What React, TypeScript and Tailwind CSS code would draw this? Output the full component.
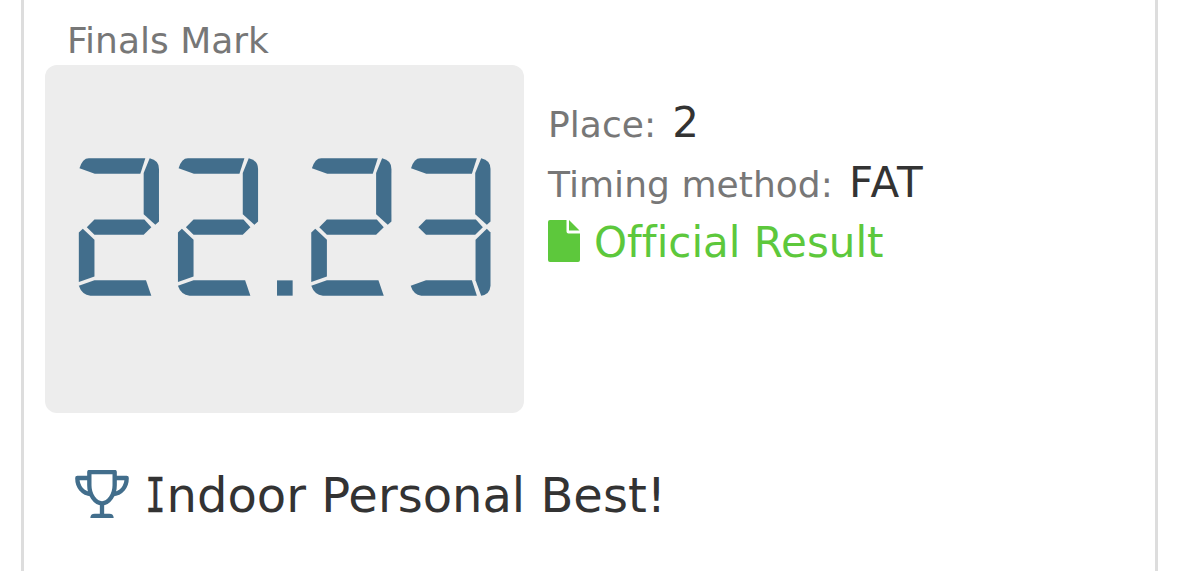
import type { ReactNode } from "react";

// Segment outlines of one LCD digit, drawn on a 244 x 415 cell
const segments = {
  top: "M3 31Q12 1 31 1H201L186 47H49Z",
  upperRight: "M214 1Q242 7 242 33V191L231 201L196 169V45Z",
  middle: "M25 208L48 185H198L219 208L196 231H48Z",
  lowerLeft: "M13 213L48 246V356L1 373V224Z",
  lowerRight: "M231 213L242 224V384Q240 410 214 414L197 368V246Z",
  bottomLong: "M1 384L48 368H203L219 414H36Q10 411 1 384Z",
  bottomShort: "M2 384L48 368H186L201 414H34Q10 411 2 384Z",
};

const two = [
  segments.top,
  segments.upperRight,
  segments.middle,
  segments.lowerLeft,
  segments.bottomLong,
];
const three = [
  segments.top,
  segments.upperRight,
  segments.middle,
  segments.lowerRight,
  segments.bottomShort,
];

const digits = [
  { x: 0, parts: two },
  { x: 298, parts: two },
  { x: 699, parts: two },
  { x: 997, parts: three },
];

function LcdTime() {
  return (
    <svg viewBox="0 0 1242 415" className="h-[138px] w-[414px] fill-[#426e8c]" aria-label="22.23">
      {digits.map((d) => (
        <g key={d.x} transform={`translate(${d.x} 0)`}>
          {d.parts.map((p) => (
            <path key={p} d={p} />
          ))}
        </g>
      ))}
      <rect x="597" y="368" width="47" height="46" />
    </svg>
  );
}

function FileIcon() {
  return (
    <svg viewBox="0 0 32 42" className="-mt-[3px] h-[42px] w-8 shrink-0 fill-[#5dc83c]">
      <path d="M2 0H18.5V11.5Q18.5 13.5 20.5 13.5H32V40Q32 42 30 42H2Q0 42 0 40V2Q0 0 2 0Z" />
      <path d="M21 0L31.5 10.5H21Z" />
    </svg>
  );
}

function TrophyIcon() {
  return (
    <svg
      viewBox="0 0 162 144"
      className="h-12 w-[54px] shrink-0 fill-none stroke-[#426e8c]"
      strokeWidth="13"
    >
      <path d="M43 6H119V46C119 74 102 100 81 100S43 74 43 46Z" strokeLinejoin="round" />
      <path
        d="M43 24H7C7 50 22 70 50 73M119 24H155C155 50 140 70 112 73"
        strokeLinejoin="round"
      />
      <path d="M81 100V136" />
      <path d="M46 144Q46 131 59 131H103Q116 131 116 144Z" className="fill-[#426e8c] stroke-none" />
    </svg>
  );
}

function Detail({ label, children }: { label: string; children: ReactNode }) {
  return (
    <p className="flex h-[60px] items-baseline whitespace-pre leading-[60px]">
      <span className="text-[36px] tracking-[0.05px] text-[#777777]">{label}</span>
      <span className="ml-4 text-[42px] tracking-[1.2px] text-[#333333]">{children}</span>
    </p>
  );
}

export default function App() {
  return (
    <main className="h-[571px] overflow-hidden bg-white px-[21px] font-['DejaVu_Sans',sans-serif]">
      <div className="h-full border-x-[3px] border-[#dddddd] pl-[21px]">
        <h2 className="h-[65px] pt-4 pl-[22px] text-[36px] leading-[50px] text-[#777777]">
          Finals Mark
        </h2>
        <div className="flex gap-6">
          <div className="h-[348px] w-[479px] rounded-xl bg-[#ededed] pt-[93px] pl-[33px]">
            <LcdTime />
          </div>
          <div className="pt-7">
            <Detail label="Place:">2</Detail>
            <Detail label="Timing method:">FAT</Detail>
            <div className="flex h-[59px] items-center gap-3.5 text-[42px] text-[#5dc83c]">
              <FileIcon />
              <span className="-mt-px whitespace-nowrap [font-variant-ligatures:none]">
                Official Result
              </span>
            </div>
          </div>
        </div>
        <div className="flex items-center gap-4 pt-[51px] pl-[30px] text-[48px] leading-[60px] text-[#333333]">
          <TrophyIcon />
          <p className="mt-px -mb-px whitespace-nowrap">
            <span className="-mr-[3.4px] -ml-1 inline-block scale-x-[0.7] font-['DejaVu_Sans_Mono',monospace] [-webkit-text-stroke:0.6px]">
              I
            </span>
            ndoor Personal Best!
          </p>
        </div>
      </div>
    </main>
  );
}
